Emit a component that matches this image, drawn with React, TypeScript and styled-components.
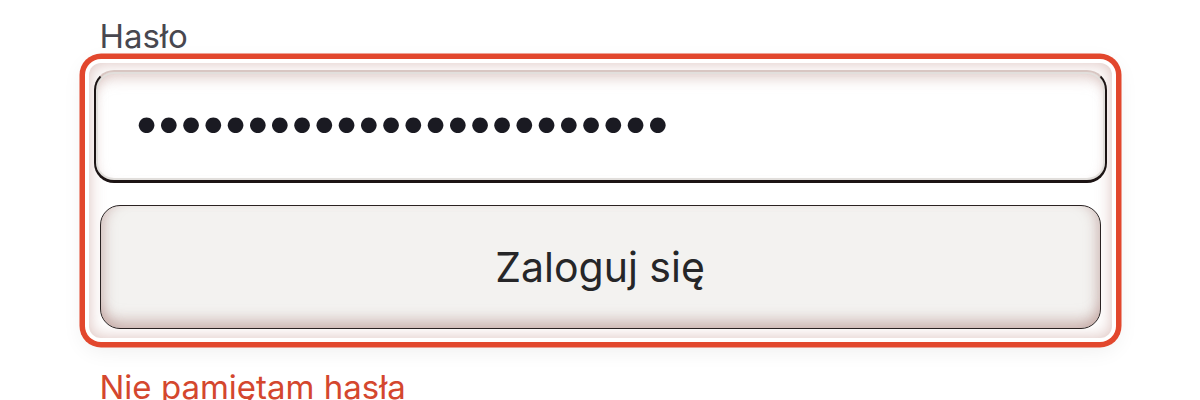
import React from "react";
import styled, { createGlobalStyle } from "styled-components";

const Global = createGlobalStyle`
  html, body { margin: 0; padding: 0; background: #ffffff; }
  body { font-family: Inter, "Noto Sans", "Liberation Sans", sans-serif; }
  * { box-sizing: border-box; }
`;

const Page = styled.div`
  width: 1023px;
  margin: 0 auto;
  padding-top: 16px;
`;

const Label = styled.label`
  display: block;
  padding-left: 11px;
  font-size: 33px;
  line-height: 40px;
  color: #48474f;
  font-weight: 400;
`;

const Group = styled.div`
  margin-top: 7px;
  display: flex;
  flex-direction: column;
  gap: 22px;
  padding: 7px 5px 9px;
  border-radius: 12px;
  background: #ffffff;
  box-shadow:
    inset 0 0 16px rgba(170, 105, 95, 0.42),
    0 0 0 4px #ffffff,
    0 0 0 9.5px #e2472d,
    0 6px 22px 6px rgba(0, 0, 0, 0.07);
`;

const Field = styled.input`
  height: 113px;
  width: 100%;
  padding: 0 0 9px 37px;
  border: 2.5px solid #1c1414;
  border-bottom-width: 3px;
  border-top-color: #d8c6c2;
  border-radius: 20px;
  background: #ffffff;
  font-family: Inter, "Noto Sans", sans-serif;
  font-size: 50px;
  letter-spacing: -5.9px;
  color: #1a1a22;
  outline: none;
  box-shadow:
    inset 0 0 0 2px #e2dfdc,
    inset 0 14px 14px -8px rgba(200, 165, 160, 0.55),
    inset 8px 0 12px -8px rgba(200, 165, 160, 0.4),
    inset -8px 0 12px -8px rgba(200, 165, 160, 0.4);
`;

const Button = styled.button`
  margin: 0 6px;
  height: 124px;
  border: 1.5px solid #2a2222;
  border-radius: 20px;
  background: #f3f2f0;
  font-family: Inter, "Noto Sans", sans-serif;
  font-size: 41px;
  color: #262628;
  cursor: pointer;
  box-shadow:
    inset 0 -16px 14px -8px rgba(185, 150, 145, 0.6),
    inset 12px 0 12px -8px rgba(185, 150, 145, 0.5),
    inset -12px 0 12px -8px rgba(185, 150, 145, 0.5);
`;

const Forgot = styled.a`
  display: block;
  margin-top: 29px;
  padding-left: 11px;
  font-size: 33px;
  line-height: 40px;
  color: #d4472e;
  text-decoration: none;
`;

export default function App() {
  return (
    <>
      <Global />
      <Page>
        <Label htmlFor="pwd">Hasło</Label>
        <Group>
          <Field id="pwd" type="password" readOnly value="abcdefghijklmnopqrstuvwx" />
          <Button type="button">Zaloguj się</Button>
        </Group>
        <Forgot href="#">Nie pamiętam hasła</Forgot>
      </Page>
    </>
  );
}
